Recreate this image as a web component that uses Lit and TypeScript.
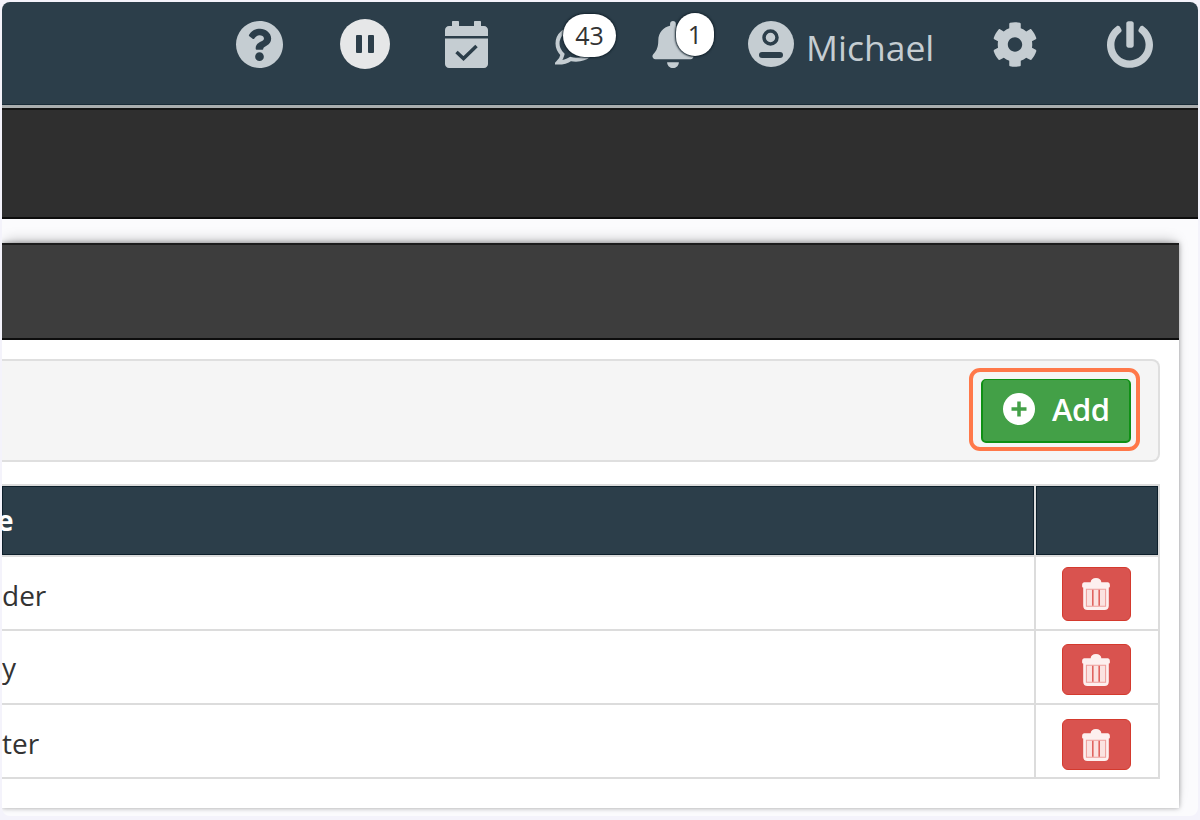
import { LitElement, css, html, svg } from 'lit';
import { customElement } from 'lit/decorators.js';

const QUESTION = 'M504 256c0 136.997-111.043 248-248 248S8 392.997 8 256C8 119.083 119.043 8 256 8s248 111.083 248 248zM262.655 90c-54.497 0-89.255 22.957-116.549 63.758-3.536 5.286-2.353 12.415 2.715 16.258l34.699 26.31c5.205 3.947 12.621 3.008 16.665-2.122 17.864-22.658 30.113-35.797 57.303-35.797 20.429 0 45.698 13.148 45.698 32.958 0 14.976-12.363 22.667-32.534 33.976C247.128 238.528 216 254.941 216 296v4c0 6.627 5.373 12 12 12h56c6.627 0 12-5.373 12-12v-1.333c0-28.462 83.186-29.647 83.186-106.667 0-58.002-60.165-102-116.531-102zM256 338c-25.365 0-46 20.635-46 46 0 25.364 20.635 46 46 46s46-20.636 46-46c0-25.365-20.635-46-46-46z';
const BELL = 'M224 512c35.32 0 63.97-28.65 63.97-64H160.03c0 35.35 28.65 64 63.97 64zm215.39-149.71c-19.32-20.76-55.47-51.99-55.47-154.29 0-77.7-54.48-139.9-127.94-155.16V32c0-17.67-14.32-32-31.98-32s-31.98 14.33-31.98 32v20.84C118.56 68.1 64.08 130.3 64.08 208c0 102.3-36.15 133.53-55.47 154.29-6 6.45-8.66 14.16-8.61 21.71.11 16.4 12.98 32 32.1 32h383.8c19.12 0 32-15.6 32.1-32 .05-7.55-2.61-15.27-8.61-21.71z';
const COG = 'M487.4 315.7l-42.6-24.6c4.3-23.2 4.3-47 0-70.2l42.6-24.6c4.9-2.8 7.1-8.6 5.5-14-11.1-35.6-30-67.8-54.7-94.6-3.8-4.1-10-5.1-14.8-2.3L380.8 110c-17.9-15.4-38.5-27.3-60.8-35.1V25.8c0-5.6-3.9-10.5-9.4-11.7-36.7-8.2-74.3-7.8-109.2 0-5.5 1.2-9.4 6.1-9.4 11.7V75c-22.2 7.9-42.8 19.8-60.8 35.1L88.7 85.5c-4.9-2.8-11-1.9-14.8 2.3-24.7 26.7-43.6 58.9-54.7 94.6-1.7 5.4.6 11.2 5.5 14L67.3 221c-4.3 23.2-4.3 47 0 70.2l-42.6 24.6c-4.9 2.8-7.1 8.6-5.5 14 11.1 35.6 30 67.8 54.7 94.6 3.8 4.1 10 5.1 14.8 2.3l42.6-24.6c17.9 15.4 38.5 27.3 60.8 35.1v49.2c0 5.6 3.9 10.5 9.4 11.7 36.7 8.2 74.3 7.8 109.2 0 5.5-1.2 9.4-6.1 9.4-11.7v-49.2c22.2-7.9 42.8-19.8 60.8-35.1l42.6 24.6c4.9 2.8 11 1.9 14.8-2.3 24.7-26.7 43.6-58.9 54.7-94.6 1.5-5.5-.7-11.3-5.6-14.1zM256 336c-44.1 0-80-35.9-80-80s35.9-80 80-80 80 35.9 80 80-35.9 80-80 80z';
const POWER = 'M400 54.1c63 45 104 118.6 104 201.9 0 136.8-110.8 247.7-247.5 248C120 504.3 8.2 393 8 256.4 7.9 173.1 48.9 99.3 111.8 54.2c11.7-8.3 28-4.8 35 7.7L162.6 90c5.9 10.5 3.1 23.8-6.6 31-41.5 30.8-68 79.6-68 134.9-.1 92.3 74.5 168.1 168 168.1 91.6 0 168.6-74.2 168-169.1-.3-51.8-24.7-101.8-68.1-134-9.7-7.2-12.4-20.5-6.5-30.9l15.8-28.1c7-12.4 23.2-16.1 34.8-7.8zM296 264V24c0-13.3-10.7-24-24-24h-32c-13.3 0-24 10.7-24 24v240c0 13.3 10.7 24 24 24h32c13.3 0 24-10.7 24-24z';

const ICON = '#c5cdd2';
const NAVY = '#2c3e4a';

const trash = svg`<svg width="28" height="32" viewBox="0 0 26 30">
  <path d="M8 4c0-2.500 2-4 5-4s5 1.500 5 4h6c1 0 2 .8 2 2.500V8c0 .6-.4 1-1 1v17c0 2.500-1.500 4-4 4H5c-2.500 0-4-1.500-4-4V9c-.6 0-1-.4-1-1V6.500C0 4.800 1 4 2 4z" fill="#fdf0ef"/>
  <path d="M4 10.500h18v16H4z" fill="#fbe3e1" stroke="#ee9f9c" stroke-width="1"/>
  <path d="M10 11v15M16 11v15" stroke="#e0645f" stroke-width="1.500"/>
</svg>`;

@customElement('app-root')
export class AppRoot extends LitElement {
  rows = ['der', 'y', 'ter'];

  render() {
    return html`<div class="frame">
      <header>
        <svg class="ic q" viewBox="8 8 496 496"><path d=${QUESTION} fill=${ICON}/></svg>
        <svg class="ic pause" viewBox="0 0 50 50">
          <circle cx="25" cy="25" r="25" fill="#e6e7e8"/>
          <rect x="16" y="16" width="6" height="18" rx="1" fill=${NAVY}/>
          <rect x="28" y="16" width="6" height="18" rx="1" fill=${NAVY}/>
        </svg>
        <svg class="ic cal" viewBox="0 0 43 47">
          <path d="M8 0h5c.600 0 1 .400 1 1v4h15V1c0-.600.400-1 1-1h5c.600 0 1 .400 1 1v4h3c2.200 0 4 1.800 4 4v6H0V9c0-2.200 1.800-4 4-4h3V1c0-.600.400-1 1-1z" fill=${ICON}/>
          <path d="M0 17.500h43V43c0 2.200-1.800 4-4 4H4c-2.200 0-4-1.800-4-4z" fill=${ICON}/>
          <path d="M11.500 31l7 6.500 13-12.500" fill="none" stroke=${NAVY} stroke-width="3.500"/>
        </svg>
        <div class="ic chat">
          <svg viewBox="0 0 42 40" width="42" height="40">
            <path d="M21 3C10 3 2.500 10 2.500 18.500c0 4.500 2.500 8.500 5 11-.5 3-2 5.500-4.500 8 4.500 0 9-1 12.500-3.500 2 .5 3.500 .7 5.500 .7 11 0 18.500-7 18.500-16.200S32 3 21 3z" fill="none" stroke=${ICON} stroke-width="4"/>
          </svg>
          <span class="badge b43">43</span>
        </div>
        <div class="ic bell">
          <svg viewBox="0 0 448 512" width="44" height="47"><path d=${BELL} fill=${ICON}/></svg>
          <span class="badge b1">1</span>
        </div>
        <svg class="ic user" viewBox="0 0 46 46">
          <circle cx="23" cy="23" r="23" fill=${ICON}/>
          <circle cx="22.500" cy="16.500" r="6.500" fill="none" stroke=${NAVY} stroke-width="3.500"/>
          <rect x="11" y="31" width="24" height="6" rx="3" fill=${NAVY}/>
        </svg>
        <span class="name">Michael</span>
        <svg class="ic cog" viewBox="0 0 512 512"><path d=${COG} fill=${ICON}/></svg>
        <svg class="ic power" viewBox="8 0 496 504"><path d=${POWER} fill=${ICON}/></svg>
      </header>
      <div class="subbar"></div>
      <main>
        <section class="panel">
          <div class="title"></div>
          <div class="toolbar">
            <div class="mark">
              <button class="add">
                <svg width="32" height="32" viewBox="0 0 32 32">
                  <circle cx="16" cy="16" r="16" fill="#fff"/>
                  <path d="M16 8.500v15M8.500 16h15" stroke="#43a047" stroke-width="3.500"/>
                </svg>
                Add
              </button>
            </div>
          </div>
          <table>
            <thead>
              <tr><th class="clip">e</th><th class="act"></th></tr>
            </thead>
            <tbody>
              ${this.rows.map(
                (r) => html`<tr>
                  <td class="label">${r}</td>
                  <td class="act"><button class="del">${trash}</button></td>
                </tr>`
              )}
            </tbody>
          </table>
        </section>
      </main>
    </div>`;
  }

  static styles = css`
    :host {
      display: block;
      width: 1200px;
      height: 820px;
      box-sizing: border-box;
      padding: 2px;
      background: #f4f3fb;
      font-family: 'Open Sans', sans-serif;
      color: #333;
    }
    .frame {
      height: 814px;
      border-radius: 8px;
      overflow: hidden;
      background: #fbfbfd;
    }
    header {
      box-sizing: border-box;
      height: 106px;
      padding: 0 0 19px 234px;
      display: flex;
      align-items: center;
      background: #2c3e4a;
      border-bottom: 3px solid #a9adae;
      box-shadow: inset 0 -1px 0 #182a36;
    }
    .ic {
      flex: none;
      display: block;
      position: relative;
    }
    .q { width: 47px; height: 47px; }
    .pause { width: 50px; height: 50px; margin-left: 57px; }
    .cal { width: 43px; height: 47px; margin-left: 55px; }
    .chat { width: 42px; height: 40px; margin-left: 67px; margin-top: 2px; }
    .bell { width: 44px; height: 47px; margin-left: 54px; }
    .bell svg, .chat svg { display: block; }
    .user { width: 46px; height: 46px; margin-left: 53px; }
    .name {
      margin-left: 12px;
      width: 186px;
      font-size: 35.500px;
      font-weight: 500;
      line-height: 46px;
      color: #c5cdd2;
      margin-top: 6px;
    }
    .cog { width: 46px; height: 47px; }
    .power { width: 46px; height: 47px; margin-left: 69px; }
    .badge {
      position: absolute;
      box-sizing: border-box;
      height: 43px;
      border-radius: 22px;
      background: #fff;
      box-shadow: 0 0 2px 1px #14232d;
      color: #333;
      font-size: 25px;
      line-height: 43px;
      text-align: center;
    }
    .b43 { left: 8px; top: -11px; width: 53px; }
    .b1 { left: 25px; top: -8px; width: 38px; }

    .subbar {
      box-sizing: border-box;
      height: 111px;
      background: #2f2f2f;
      border-top: 2px solid #141414;
      border-bottom: 2px solid #0d0d0d;
    }
    main { padding-top: 24px; }
    .panel {
      width: 1177px;
      height: 565px;
      background: #fff;
      box-shadow: 0 0 5px rgba(0, 0, 0, 0.35), 0 -6px 12px -4px rgba(0, 0, 0, 0.25);
    }
    .title {
      box-sizing: border-box;
      height: 97px;
      background: #3d3d3d;
      border-top: 2px solid #1c1c1c;
      border-bottom: 2px solid #0d0d0d;
    }
    .toolbar {
      box-sizing: border-box;
      width: 1158px;
      height: 103px;
      margin-top: 19px;
      display: flex;
      justify-content: flex-end;
      align-items: center;
      padding: 0 18px 2px 0;
      background: #f5f5f5;
      border: 2px solid #dfdfdf;
      border-left: none;
      border-radius: 0 8px 8px 0;
    }
    .mark {
      padding: 7px 5px 4px 8px;
      border: 4px solid #ff7849;
      border-radius: 11px;
    }
    .add {
      display: flex;
      align-items: center;
      gap: 17px;
      box-sizing: border-box;
      width: 150px;
      height: 64px;
      padding: 0 0 4px 20px;
      background: #43a047;
      border: 2px solid #0f9015;
      border-top-width: 1px;
      border-radius: 5px;
      color: #fff;
      font: 600 31px 'Open Sans', sans-serif;
      letter-spacing: -0.5px;
    }
    table {
      width: 1158px;
      margin-top: 22px;
      border-collapse: collapse;
      table-layout: fixed;
    }
    th {
      height: 68px;
      padding: 0 0 1px;
      background: #2c3e4a;
      color: #fff;
      font-size: 28px;
      font-weight: 700;
      text-align: left;
      border: 2px solid #dcdcdc;
      border-left: none;
      box-shadow: inset 0 0 0 1px #0d1f2b;
    }
    .clip { text-indent: -5px; }
    td {
      height: 72px;
      padding: 0;
      font-size: 28px;
      border: 2px solid #dcdcdc;
      border-left: none;
    }
    tbody tr:nth-child(odd) .label { height: 68px; padding-top: 4px; }
    .act { width: 122px; text-align: center; }
    .del {
      display: inline-flex;
      align-items: center;
      justify-content: center;
      box-sizing: border-box;
      width: 69px;
      height: 51px;
      margin: 5px 2px 0 0;
      padding: 0;
      vertical-align: middle;
      background: #d9534f;
      border: 1px solid #d43a2e;
      border-radius: 6px;
    }
    tbody tr:first-child .del { height: 54px; margin-top: 2px; }
    tbody tr:last-child .del { margin-top: 7px; }
  `;
}
